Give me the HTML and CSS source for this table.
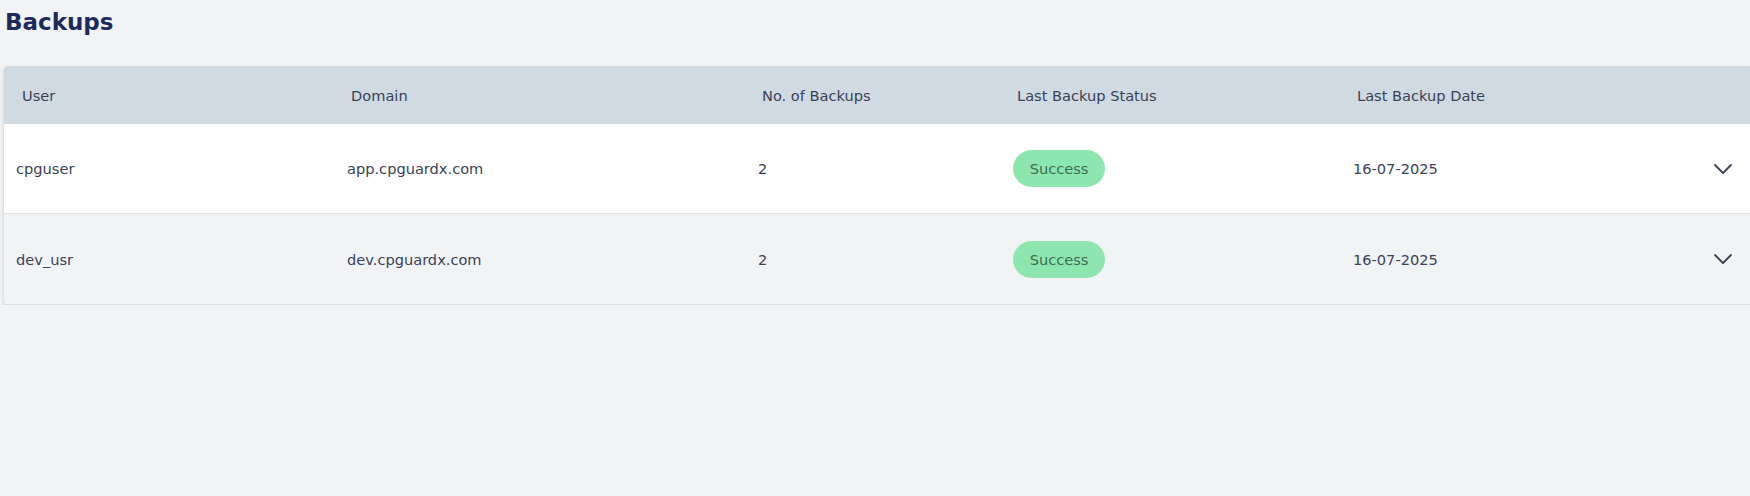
FILE: index.html
```html
<!DOCTYPE html>
<html>
<head>
<meta charset="utf-8">
<link rel="stylesheet" href="styles.css">
</head>
<body>
<div class="page">
  <h1 class="title">Backups</h1>
  <div class="card">
    <div class="row head">
      <div class="cell">User</div>
      <div class="cell">Domain</div>
      <div class="cell">No. of Backups</div>
      <div class="cell">Last Backup Status</div>
      <div class="cell">Last Backup Date</div>
      <div class="cell"></div>
    </div>
    <div class="row body odd">
      <div class="cell">cpguser</div>
      <div class="cell">app.cpguardx.com</div>
      <div class="cell">2</div>
      <div class="cell"><span class="pill">Success</span></div>
      <div class="cell">16-07-2025</div>
      <div class="cell chev"><svg width="18" height="10" viewBox="0 0 18 10"><path d="M1 1 L9 9 L17 1" fill="none" stroke="#3b4254" stroke-width="1.8" stroke-linecap="round" stroke-linejoin="round"/></svg></div>
    </div>
    <div class="row body even">
      <div class="cell">dev_usr</div>
      <div class="cell">dev.cpguardx.com</div>
      <div class="cell">2</div>
      <div class="cell"><span class="pill">Success</span></div>
      <div class="cell">16-07-2025</div>
      <div class="cell chev"><svg width="18" height="10" viewBox="0 0 18 10"><path d="M1 1 L9 9 L17 1" fill="none" stroke="#3b4254" stroke-width="1.8" stroke-linecap="round" stroke-linejoin="round"/></svg></div>
    </div>
  </div>
</div>
</body>
</html>
```

FILE: styles.css
```css
html, body {
  margin: 0;
  padding: 0;
  background: #f2f3f5;
}
body {
  font-family: "DejaVu Sans", "Noto Sans", sans-serif;
  color: #3a4256;
}
.page {
  padding: 4px 0 0 4px;
}
.title {
  margin: 0 0 0 1px;
  font-size: 23px;
  line-height: 36px;
  font-weight: 700;
  color: #1c2b5c;
  height: 62px;
}
.card {
  background: #fff;
  border-radius: 4px 0 0 4px;
  border-bottom: 1px solid #dcdee3;
  box-shadow: 0 2px 3px rgba(0, 0, 0, 0.16), 0 4px 8px rgba(0, 0, 0, 0.06);
  overflow: hidden;
}
.row {
  display: grid;
  grid-template-columns: 331px 411px 255px 340px 1fr 48px;
  align-items: center;
}
.head {
  height: 58px;
  background: #d0dae3;
  font-size: 14.6px;
}
.head .cell {
  padding-left: 16px;
}
.head .cell:first-child {
  padding-left: 18px;
}
.body {
  height: 90px;
  font-size: 14.6px;
}
.body .cell {
  padding-left: 12px;
}
.odd {
  background: #fff;
  border-bottom: 1px solid #e2e4ea;
  height: 89px;
}
.even {
  background: #f2f3f5;
}
.pill {
  display: inline-flex;
  align-items: center;
  justify-content: center;
  width: 92px;
  height: 37px;
  border-radius: 19px;
  background: #8de6ae;
  color: #3d6e52;
  font-size: 14.6px;
}
.chev {
  display: flex;
  align-items: center;
}
.chev svg {
  display: block;
}
```
